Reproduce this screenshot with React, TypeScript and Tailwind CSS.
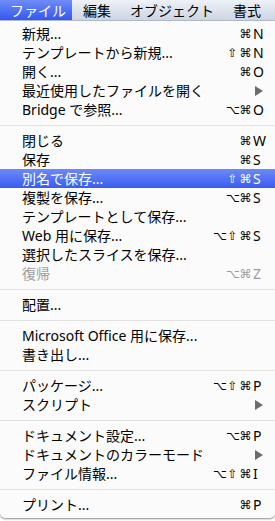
import React from "react";

type Item =
  | { sep: true }
  | {
      sep?: false;
      label: string;
      mods?: string[];
      keyChar?: string;
      sub?: boolean;
      disabled?: boolean;
      active?: boolean;
    };

const items: Item[] = [
  { label: "新規...", mods: ["⌘"], keyChar: "N" },
  { label: "テンプレートから新規...", mods: ["⇧", "⌘"], keyChar: "N" },
  { label: "開く...", mods: ["⌘"], keyChar: "O" },
  { label: "最近使用したファイルを開く", sub: true },
  { label: "Bridge で参照...", mods: ["⌥", "⌘"], keyChar: "O" },
  { sep: true },
  { label: "閉じる", mods: ["⌘"], keyChar: "W" },
  { label: "保存", mods: ["⌘"], keyChar: "S" },
  { label: "別名で保存...", mods: ["⇧", "⌘"], keyChar: "S", active: true },
  { label: "複製を保存...", mods: ["⌥", "⌘"], keyChar: "S" },
  { label: "テンプレートとして保存..." },
  { label: "Web 用に保存...", mods: ["⌥", "⇧", "⌘"], keyChar: "S" },
  { label: "選択したスライスを保存..." },
  { label: "復帰", mods: ["⌥", "⌘"], keyChar: "Z", disabled: true },
  { sep: true },
  { label: "配置..." },
  { sep: true },
  { label: "Microsoft Office 用に保存..." },
  { label: "書き出し..." },
  { sep: true },
  { label: "パッケージ...", mods: ["⌥", "⇧", "⌘"], keyChar: "P" },
  { label: "スクリプト", sub: true },
  { sep: true },
  { label: "ドキュメント設定...", mods: ["⌥", "⌘"], keyChar: "P" },
  { label: "ドキュメントのカラーモード", sub: true },
  { label: "ファイル情報...", mods: ["⌥", "⇧", "⌘"], keyChar: "I" },
  { sep: true },
  { label: "プリント...", mods: ["⌘"], keyChar: "P" },
];

const font = { fontFamily: '"Noto Sans", "Noto Sans CJK JP", sans-serif' };
const symFont = { fontFamily: '"DejaVu Sans", "Noto Sans CJK JP", sans-serif' };

export default function App() {
  return (
    <div className="w-[275px] h-[521px] bg-white overflow-hidden text-[14px] text-black" style={font}>
      {/* menu bar */}
      <div className="h-[21px] flex items-stretch bg-gradient-to-b from-[#eef2f8] to-[#ccd5e2] border-b border-[#b4bdca]">
        <div className="w-[72px] pl-[10px] flex items-center text-white bg-gradient-to-b from-[#6f8cf8] to-[#3556ef]">
          ファイル
        </div>
        <div className="ml-[11px] flex items-center">編集</div>
        <div className="ml-[19px] flex items-center">オブジェクト</div>
        <div className="ml-[19px] flex items-center">書式</div>
      </div>

      {/* menu */}
      <div className="bg-[#fbfbfb] pt-[3px] pb-[4px] rounded-b-[5px] shadow-[0_1px_2px_rgba(0,0,0,0.45)]">
        {items.map((it, i) =>
          it.sep ? (
            <div key={i} className="h-[12px] flex items-center">
              <div className="w-full h-px bg-[#e1e1e1]" />
            </div>
          ) : (
            <div
              key={i}
              className={
                "h-[19px] flex items-center leading-none " +
                (it.active
                  ? "bg-gradient-to-b from-[#6d89f7] to-[#3a5bf0] text-white"
                  : it.disabled
                  ? "text-[#9b9b9b]"
                  : "text-black")
              }
            >
              <div className="pl-[22px] flex-1 whitespace-nowrap">{it.label}</div>
              {it.sub ? (
                <svg width="8" height="10" viewBox="0 0 8 10" className="mr-[12px]">
                  <polygon points="0,0 8,5 0,10" fill={it.active ? "#fff" : "#6b6b6b"} />
                </svg>
              ) : it.mods ? (
                <div className="flex items-center">
                  {it.mods.map((m, j) => (
                    <span key={j} className="w-[13px] text-center text-[12px]" style={symFont}>
                      {m}
                    </span>
                  ))}
                  <span className="w-[23px] pl-[1px] text-[14px]">{it.keyChar}</span>
                </div>
              ) : null}
            </div>
          )
        )}
      </div>
    </div>
  );
}
